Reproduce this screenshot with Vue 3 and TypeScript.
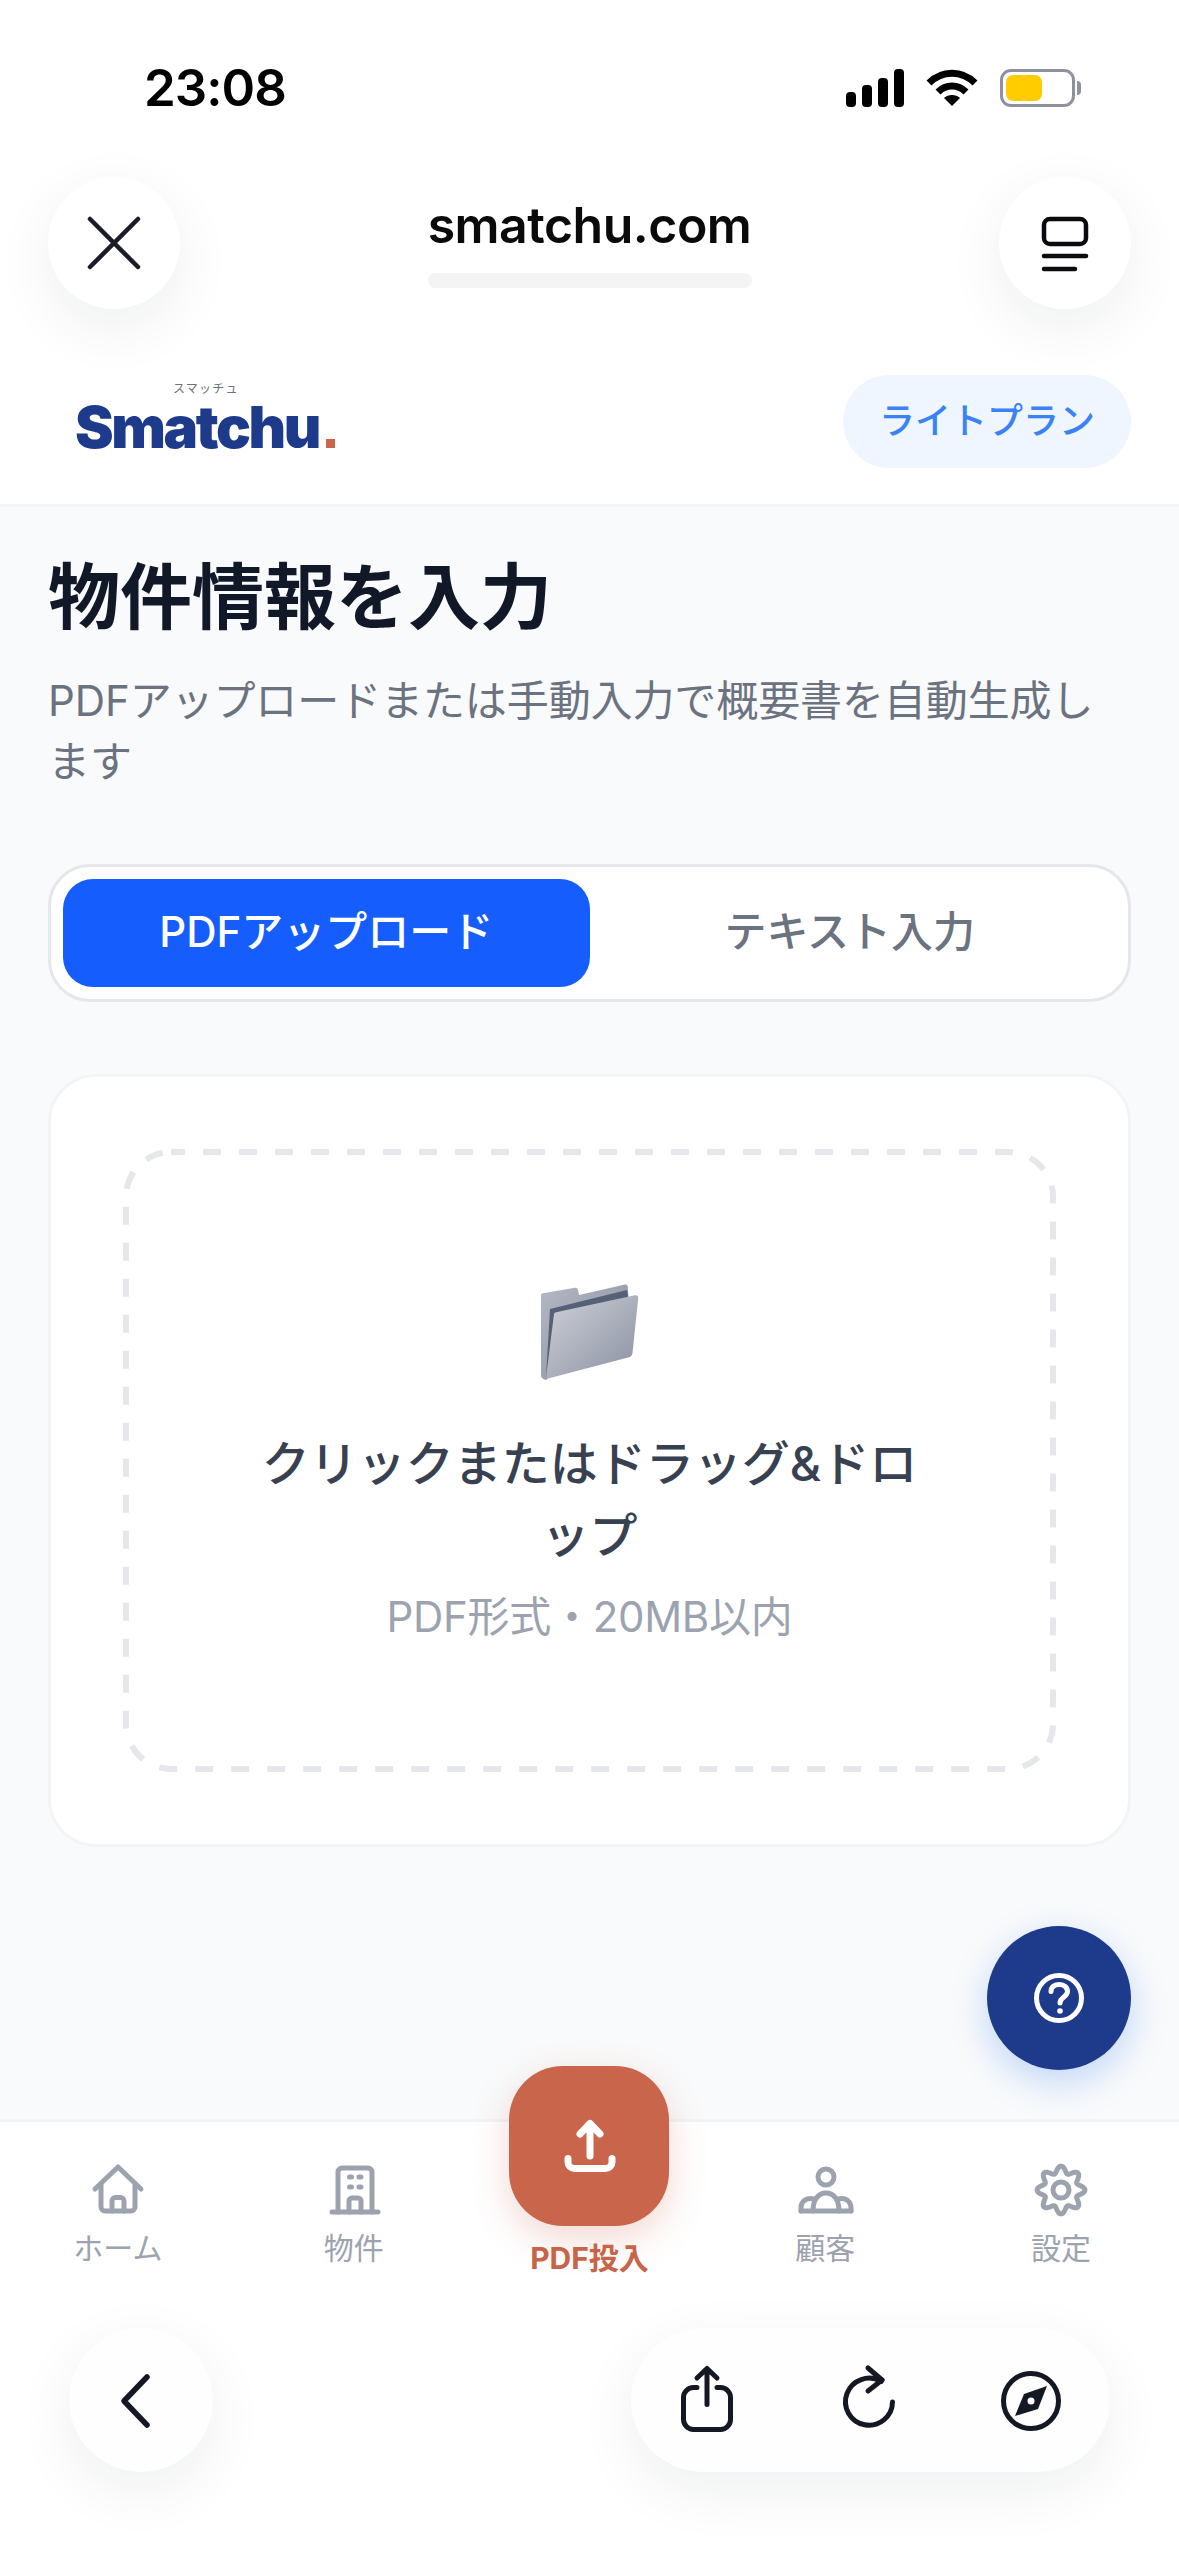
<template>
  <div class="page">
    <div class="status">
      <span class="status__time">23:08</span>
      <div class="status__icons">
        <svg width="58" height="38" viewBox="0 0 58 38" fill="#000">
          <rect x="0" y="23" width="10" height="15" rx="4" />
          <rect x="16" y="16" width="10" height="22" rx="4" />
          <rect x="32" y="9" width="10" height="29" rx="4" />
          <rect x="48" y="0" width="10" height="38" rx="4" />
        </svg>
        <svg width="52" height="38" viewBox="0 0 52 38" fill="none" stroke="#000" stroke-width="7">
          <path d="M3 14 C16 1 36 1 49 14" />
          <path d="M12 23 C20 15 32 15 40 23" />
          <path d="M26 37 L18 29 C22 25 30 25 34 29 Z" fill="#000" stroke="none" />
        </svg>
        <div class="battery">
          <div class="battery__fill"></div>
          <div class="battery__nub"></div>
        </div>
      </div>
    </div>

    <div class="browser-top">
      <button class="round-btn">
        <svg width="60" height="60" viewBox="0 0 60 60" fill="none" stroke="#1a1c28" stroke-width="4.5" stroke-linecap="round">
          <path d="M6 6 L54 54 M54 6 L6 54" />
        </svg>
      </button>
      <div class="address">
        <div class="address__url">smatchu.com</div>
        <div class="address__bar"></div>
      </div>
      <button class="round-btn">
        <svg width="60" height="60" viewBox="0 0 60 60" fill="none" stroke="#0b0b0f" stroke-width="4.5" stroke-linecap="round">
          <rect x="9" y="6" width="42" height="25" rx="6" />
          <path d="M9 43 H51 M9 56 H40" />
        </svg>
      </button>
    </div>

    <header class="app-header">
      <div class="logo">
        <div class="logo__kana">スマッチュ</div>
        <div class="logo__word">Smatchu<span class="logo__dot"></span></div>
      </div>
      <div class="plan">ライトプラン</div>
    </header>

    <main class="content">
      <h1 class="content__title">物件情報を入力</h1>
      <p class="content__sub">PDFアップロードまたは手動入力で概要書を自動生成します</p>

      <div class="tabs">
        <div v-for="t in tabs" :key="t" class="tab" :class="{ 'tab--active': t === activeTab }">{{ t }}</div>
      </div>

      <section class="card">
        <div class="drop">
          <svg class="drop__dash" width="933" height="623" viewBox="0 0 933 623" fill="none">
            <rect x="3" y="3" width="927" height="617" rx="45" stroke="#e5e7eb" stroke-width="6" stroke-dasharray="18 18" stroke-dashoffset="4" />
          </svg>
          <svg class="drop__icon" width="120" height="120" viewBox="0 0 120 120">
            <defs>
              <linearGradient id="folderBack" x1="0" y1="0" x2="1" y2="1">
                <stop offset="0" stop-color="#b4b8c3" />
                <stop offset="1" stop-color="#868c9d" />
              </linearGradient>
              <linearGradient id="folderFront" x1="0" y1="0" x2="1" y2="1">
                <stop offset="0" stop-color="#cfd1d7" />
                <stop offset="1" stop-color="#8a90a2" />
              </linearGradient>
            </defs>
            <path d="M11 22 Q11 20.500 13 20.300 L45 14.800 Q47.500 14.500 48 17 L49 22 L95 11.500 Q97.500 11 97.800 13.500 L99 32 L16 107 Q11 106 11 102 Z" fill="url(#folderBack)" />
            <path d="M20 36 L97 17 L99 30 L22 100 L16 104 Z" fill="#566076" />
            <path d="M24 41 Q24.500 39.500 26 39.200 L105 22.300 Q108.500 21.800 108.200 25 L102.500 80 Q102 83.500 99 84.200 L20 105 Q16 106 16.300 102 Z" fill="url(#folderFront)" />
          </svg>
          <div class="drop__title">クリックまたはドラッグ&amp;ドロップ</div>
          <div class="drop__hint">PDF形式・20MB以内</div>
        </div>
      </section>

      <button class="help">
        <svg width="60" height="60" viewBox="0 0 60 60" fill="none" stroke="#fff" stroke-width="5" stroke-linecap="round">
          <circle cx="30" cy="30" r="22.500" />
          <path d="M22 23.500 C22 18.500 26 16.500 30.500 16.500 C35 16.500 38.500 19.500 38.500 23.500 C38.500 29 31 29 31 35" />
          <circle cx="31" cy="43" r="2.800" fill="#fff" stroke="none" />
        </svg>
      </button>
    </main>

    <nav class="tabbar">
      <div class="tabbar__item">
        <svg class="nav-icon" width="60" height="60" viewBox="0 0 60 60">
          <path d="M7 29 L30 7 L53 29" />
          <path d="M13 25 V47 a4 4 0 0 0 4 4 H43 a4 4 0 0 0 4 -4 V25" />
          <path d="M24 51 V41 a3.500 3.500 0 0 1 3.500 -3.500 h5 a3.500 3.500 0 0 1 3.500 3.500 V51" />
        </svg>
        <span>ホーム</span>
      </div>
      <div class="tabbar__item">
        <svg class="nav-icon" width="60" height="60" viewBox="0 0 60 60">
          <path d="M8 52 H54" />
          <path d="M14 52 V12 a4 4 0 0 1 4 -4 H44 a4 4 0 0 1 4 4 V52" />
          <path d="M25 52 V41 a3 3 0 0 1 3 -3 h6 a3 3 0 0 1 3 3 V52" />
          <path d="M25.500 17 h2 M35 17 h2 M25.500 27 h2 M35 27 h2" />
        </svg>
        <span>物件</span>
      </div>
      <div class="tabbar__item tabbar__item--main">
        <div class="upload">
          <svg width="72" height="72" viewBox="0 0 72 72" fill="none" stroke="#fff" stroke-width="7" stroke-linecap="round" stroke-linejoin="round">
            <path d="M37 46 V13.500 M27 24 L37 13.500 L47 24" />
            <path d="M15 48.500 V52 a6.500 6.500 0 0 0 6.500 6.500 H52.500 a6.500 6.500 0 0 0 6.500 -6.500 V48.500" />
          </svg>
        </div>
        <span>PDF投入</span>
      </div>
      <div class="tabbar__item">
        <svg class="nav-icon" width="60" height="60" viewBox="0 0 60 60">
          <circle cx="31" cy="17" r="8" />
          <path d="M6 51 H56" />
          <path d="M18 51 C18 40 23 33 31 33 C39 33 44 40 44 51" />
          <path d="M19 39 C12 37 6 41 6 48 V51 M43 39 C50 37 56 41 56 48 V51" />
        </svg>
        <span>顧客</span>
      </div>
      <div class="tabbar__item">
        <svg class="nav-icon nav-icon--gear" width="60" height="60" viewBox="0 0 60 60">
          <path :d="gearPath" />
          <circle cx="30" cy="30" r="8" />
        </svg>
        <span>設定</span>
      </div>
    </nav>

    <div class="browser-bottom">
      <button class="back-btn">
        <svg width="60" height="60" viewBox="0 0 60 60" fill="none" stroke="#141824" stroke-width="5.500" stroke-linecap="round" stroke-linejoin="round">
          <path d="M36 7 L13 31 L36 55" />
        </svg>
      </button>
      <div class="actions">
        <svg class="bar-icon" width="60" height="80" viewBox="0 0 60 80">
          <path d="M20 27.500 H16.500 a10 10 0 0 0 -10 10 V59.500 a10 10 0 0 0 10 10 H43.500 a10 10 0 0 0 10 -10 V37.500 a10 10 0 0 0 -10 -10 H40" />
          <path d="M30 44.500 V9 M20 18 L30 8.500 L40 18" />
        </svg>
        <svg class="bar-icon" width="60" height="80" viewBox="0 0 60 80">
          <path d="M53.500 42 A23.500 23.500 0 1 1 42 21.500 L43 20" />
          <path d="M29 8 L43 20 L29 31" />
        </svg>
        <svg class="bar-icon" width="60" height="80" viewBox="0 0 60 80">
          <circle cx="30" cy="41" r="27.500" />
          <path d="M46 26 L37 49 L14 56 L23 34 Z" fill="#141824" stroke="none" />
          <circle cx="30" cy="41" r="3.500" fill="#fff" stroke="none" />
        </svg>
      </div>
    </div>
  </div>
</template>

<script setup lang="ts">
import { computed, ref } from 'vue'

const tabs = ['PDFアップロード', 'テキスト入力']
const activeTab = ref('PDFアップロード')

// scalloped outline for the settings gear
const gearPath = computed(() => {
  const pts: string[] = []
  for (let i = 0; i < 96; i++) {
    const a = (i / 96) * Math.PI * 2 - Math.PI / 2
    const r = 20.5 + 3.5 * Math.cos(8 * (a + Math.PI / 2))
    pts.push(`${(30 + r * Math.cos(a)).toFixed(2)} ${(30 + r * Math.sin(a)).toFixed(2)}`)
  }
  return `M${pts.join(' L')} Z`
})
</script>

<style>
body {
  background: #fff;
}
</style>

<style scoped>
.page {
  width: 1179px;
  height: 2556px;
  display: flex;
  flex-direction: column;
  overflow: hidden;
  background: #fff;
  font-family: Inter, "Noto Sans CJK JP", sans-serif;
}

button {
  border: none;
  padding: 0;
  display: flex;
  align-items: center;
  justify-content: center;
}

.status {
  height: 177px;
  flex-shrink: 0;
  display: flex;
  justify-content: space-between;
  align-items: flex-start;
  padding: 58px 104px 0 144px;
  box-sizing: border-box;
}

.status__time {
  font-size: 51px;
  line-height: 60px;
  font-weight: 600;
  letter-spacing: -1px;
  color: #000;
}

.status__icons {
  display: flex;
  align-items: center;
  gap: 22px;
  padding-top: 11px;
}

.battery {
  position: relative;
  width: 75px;
  height: 38px;
  box-sizing: border-box;
  border: 3px solid #8e929e;
  border-radius: 11px;
  padding: 3px;
}

.battery__fill {
  width: 36px;
  height: 100%;
  background: #ffcc00;
  border-radius: 7px;
}

.battery__nub {
  position: absolute;
  right: -9px;
  top: 9px;
  width: 4px;
  height: 14px;
  background: #8e929e;
  border-radius: 0 4px 4px 0;
}

.browser-top {
  display: flex;
  justify-content: space-between;
  padding: 0 48px;
  margin-bottom: 66px;
}

.round-btn {
  width: 132px;
  height: 132px;
  border-radius: 50%;
  background: #fff;
  box-shadow: 0 18px 60px rgba(17, 24, 39, 0.07);
}

.address {
  display: flex;
  flex-direction: column;
  align-items: center;
  padding-top: 18px;
}

.address__url {
  font-size: 50px;
  line-height: 60px;
  font-weight: 600;
  letter-spacing: -0.5px;
  color: #0a0a0a;
}

.address__bar {
  width: 324px;
  height: 15px;
  margin-top: 18px;
  border-radius: 8px;
  background: #f4f4f5;
}

.app-header {
  display: flex;
  justify-content: space-between;
  align-items: center;
  padding: 0 48px 36px 75px;
  border-bottom: 3px solid #f3f4f6;
}

.logo {
  display: flex;
  flex-direction: column;
  margin-top: -6px;
}

.logo__kana {
  padding-left: 98px;
  font-size: 12px;
  line-height: 16px;
  letter-spacing: 1.200px;
  color: #6b7280;
}

.logo__word {
  display: flex;
  align-items: baseline;
  font-size: 58px;
  line-height: 60px;
  font-weight: 900;
  letter-spacing: -2.400px;
  color: #1e3a8a;
}

.logo__dot {
  width: 9px;
  height: 9px;
  margin-left: 7px;
  background: #c8654a;
}

.plan {
  width: 288px;
  height: 93px;
  box-sizing: border-box;
  padding-bottom: 8px;
  display: flex;
  align-items: center;
  justify-content: center;
  border-radius: 47px;
  background: #eff6ff;
  color: #3b82f6;
  font-size: 36px;
  font-weight: 500;
}

.content {
  position: relative;
  flex: 1;
  padding: 0 48px;
  background: #f9fafb;
}

.content__title {
  margin: 42px 0 25px;
  font-size: 72px;
  line-height: 96px;
  font-weight: 700;
  color: #111827;
}

.content__sub {
  margin: 0 0 72px;
  font-size: 42px;
  line-height: 61px;
  letter-spacing: -0.1px;
  color: #6b7280;
}

.tabs {
  display: flex;
  padding: 12px;
  border: 3px solid #e5e7eb;
  border-radius: 42px;
  background: #fff;
}

.tab {
  flex: 0 0 50%;
  height: 108px;
  box-sizing: border-box;
  padding: 0 6px 9px 0;
  display: flex;
  align-items: center;
  justify-content: center;
  border-radius: 30px;
  font-size: 42px;
  font-weight: 500;
  color: #6b7280;
}

.tab--active {
  padding-right: 0;
  background: #155dfc;
  color: #fff;
}

.card {
  margin-top: 72px;
  padding: 72px;
  border: 3px solid #f3f4f6;
  border-radius: 48px;
  background: #fff;
}

.drop {
  position: relative;
  height: 623px;
  box-sizing: border-box;
  display: flex;
  flex-direction: column;
  align-items: center;
  padding: 124px 126px 0;
}

.drop__dash {
  position: absolute;
  left: 0;
  top: 0;
}

.drop__icon {
  margin-bottom: 35px;
}

.drop__title {
  font-size: 48px;
  line-height: 72px;
  font-weight: 500;
  color: #374151;
  text-align: center;
  line-break: loose;
}

.drop__hint {
  margin-top: 15px;
  font-size: 42px;
  line-height: 60px;
  letter-spacing: -0.3px;
  color: #9ca3af;
}

.help {
  position: absolute;
  right: 48px;
  bottom: 49px;
  width: 144px;
  height: 144px;
  border-radius: 50%;
  background: #1e3a8a;
  box-shadow: 0 12px 36px rgba(59, 130, 246, 0.3);
}

.tabbar {
  display: flex;
  flex-shrink: 0;
  border-top: 3px solid #f3f4f6;
  background: #fff;
}

.tabbar__item {
  flex: 1;
  display: flex;
  flex-direction: column;
  align-items: center;
  padding-top: 38px;
  font-size: 30px;
  line-height: 44px;
  color: #9ca3af;
}

.tabbar__item > span {
  margin-top: 6px;
}

.tabbar__item--main {
  padding-top: 0;
  color: #c8654a;
  font-weight: 700;
}

.tabbar__item--main > span {
  margin-top: 10px;
}

.nav-icon {
  fill: none;
  stroke: #9ca3af;
  stroke-width: 5;
  stroke-linecap: round;
  stroke-linejoin: round;
}

.upload {
  position: relative;
  width: 160px;
  height: 160px;
  margin-top: -56px;
  display: flex;
  align-items: center;
  justify-content: center;
  border-radius: 54px;
  background: #c8654a;
  box-shadow: 0 12px 36px rgba(200, 101, 74, 0.25);
}

.browser-bottom {
  display: flex;
  justify-content: space-between;
  padding: 48px 69px 84px;
  background: #fff;
}

.back-btn {
  width: 144px;
  height: 144px;
  border-radius: 50%;
  background: #fefefe;
  box-shadow: 0 18px 60px rgba(17, 24, 39, 0.07);
}

.actions {
  width: 479px;
  height: 144px;
  box-sizing: border-box;
  display: flex;
  align-items: center;
  gap: 102px;
  padding: 0 46px;
  border-radius: 72px;
  background: #fefefe;
  box-shadow: 0 18px 60px rgba(17, 24, 39, 0.07);
}

.bar-icon {
  fill: none;
  stroke: #141824;
  stroke-width: 5;
  stroke-linecap: round;
  stroke-linejoin: round;
}
</style>
